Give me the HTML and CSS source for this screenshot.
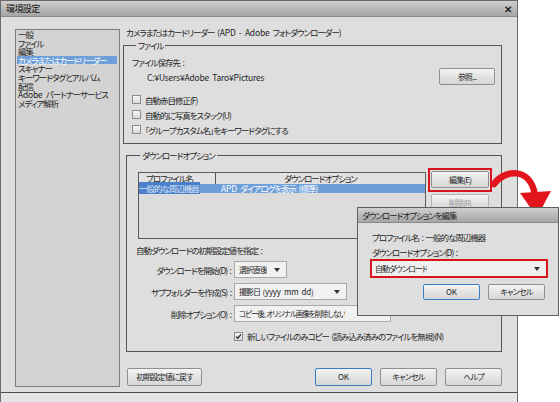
FILE: index.html
```html
<!DOCTYPE html>
<html lang="ja">
<head>
<meta charset="utf-8">
<title>環境設定</title>
<link rel="stylesheet" href="styles.css">
</head>
<body>
<div class="window">
  <div class="titlebar">
    <span class="title">環境設定</span>
    <span class="close">✕</span>
  </div>
  <div class="client">
    <ul class="nav">
      <li>一般</li>
      <li>ファイル</li>
      <li>編集</li>
      <li class="selected">カメラまたはカードリーダー</li>
      <li>スキャナー</li>
      <li>キーワードタグとアルバム</li>
      <li>配信</li>
      <li><span class="lat">Adobe </span>パートナーサービス</li>
      <li>メディア解析</li>
    </ul>
    <div class="panel">
      <div class="heading">カメラまたはカードリーダー <span class="lat">(APD - Adobe </span>フォトダウンローダー<span class="lat">)</span></div>
      <fieldset class="group group-file">
        <legend>ファイル</legend>
        <div class="label">ファイル保存先 :</div>
        <div class="path-row">
          <span class="path lat">C:¥Users¥Adobe Taro¥Pictures</span>
          <button class="btn btn-browse">参照...</button>
        </div>
        <div class="checks">
          <label class="check"><span class="box"></span>自動赤目修正(F)</label>
          <label class="check"><span class="box"></span>自動的に写真をスタック(U)</label>
          <label class="check"><span class="box"></span>「グループカスタム名」をキーワードタグにする</label>
        </div>
      </fieldset>
      <fieldset class="group group-dl">
        <legend>ダウンロードオプション</legend>
        <div class="list-row">
          <div class="listview">
            <div class="lv-head">
              <span class="c1">プロファイル名</span>
              <span class="c2">ダウンロードオプション</span>
            </div>
            <div class="lv-row sel">
              <span class="c1"><span class="hl">一般的な周辺機器</span></span>
              <span class="c2"><span class="lat">APD </span>ダイアログを表示 (標準)</span>
            </div>
          </div>
          <div class="side-btns">
            <div class="redbox"><button class="btn btn-side">編集(E)</button></div>
            <button class="btn btn-side btn-disabled">削除(R)</button>
          </div>
        </div>
        <div class="sub-heading">自動ダウンロードの初期設定値を指定 :</div>
        <div class="form">
          <span class="flabel">ダウンロードを開始(D) :</span>
          <div class="select sel-start"><span class="stext">選択直後</span><i class="caret"></i></div>
          <span class="flabel">サブフォルダーを作成(S) :</span>
          <div class="select sel-folder"><span class="stext">撮影日 <span class="lat">(yyyy mm dd)</span></span><i class="caret"></i></div>
          <span class="flabel">削除オプション(O) :</span>
          <div class="select sel-delete"><span class="stext">コピー後、オリジナル画像を削除しない</span><i class="caret"></i></div>
          <span class="flabel"></span>
          <label class="check check-on"><span class="box"><svg viewBox="0 0 9 9" width="9" height="9"><path d="M1.6 4.6 L3.6 6.8 L7.6 1.8" fill="none" stroke="#1b1b1b" stroke-width="1.6"/></svg></span>新しいファイルのみコピー (読み込み済みのファイルを無視)(N)</label>
        </div>
      </fieldset>
      <div class="footer">
        <button class="btn btn-reset">初期設定値に戻す</button>
        <div class="footer-right">
          <button class="btn btn-default btn-foot lat">OK</button>
          <button class="btn btn-foot">キャンセル</button>
          <button class="btn btn-foot">ヘルプ</button>
        </div>
      </div>
    </div>
  </div>
</div>

<svg class="arrow" width="70" height="60" viewBox="0 0 70 60">
  <path d="M4 22 C14 8 40 4 45 33" fill="none" stroke="#e2141c" stroke-width="6.5" stroke-linecap="round"/>
  <polygon points="30,31 61,29 47,55" fill="#e2141c"/>
</svg>

<div class="dialog">
  <div class="dlg-title">ダウンロードオプションを編集</div>
  <div class="dlg-body">
    <div class="dlg-line">プロファイル名 : 一般的な周辺機器</div>
    <div class="dlg-line">ダウンロードオプション(D) :</div>
    <div class="dlg-redbox">
      <div class="dlg-select"><span class="stext">自動ダウンロード</span><i class="caret"></i></div>
    </div>
    <div class="dlg-btns">
      <button class="btn btn-default btn-dlg lat">OK</button>
      <button class="btn btn-dlg">キャンセル</button>
    </div>
  </div>
</div>
</body>
</html>
```
FILE: styles.css
```css
* { box-sizing: border-box; }
html, body {
  margin: 0;
  padding: 0;
  background: #ffffff;
}
body {
  width: 560px;
  height: 402px;
  position: relative;
  overflow: hidden;
  font-family: "Noto Sans CJK JP", "Noto Sans", sans-serif;
  font-size: 8.5px;
  letter-spacing: -1px;
  word-spacing: 1.6px;
  font-feature-settings: "palt";
  color: #1e1e1e;
}
.lat { letter-spacing: -0.2px; }
.window {
  width: 518px;
  height: 402px;
  border: 1px solid #6a6a6a;
  border-bottom: none;
  background: #e4e4e4;
  display: flex;
  flex-direction: column;
}
.titlebar {
  height: 16px;
  background: linear-gradient(#cfcfcf, #a4a4a4);
  border-bottom: 1px solid #8a8a8a;
  display: flex;
  align-items: center;
  justify-content: space-between;
  padding: 0 5px 0 5px;
  flex: none;
}
.title { font-size: 9px; line-height: 12px; color: #111; letter-spacing: -0.6px; }
.close { font-size: 10px; font-weight: bold; color: #222; line-height: 10px; letter-spacing: 0; }
.client {
  height: 376px;
  background: #dedede;
  border-bottom: 1px solid #4a4a4a;
  display: flex;
  padding: 9px 0 0 14px;
  flex: none;
}
.nav {
  list-style: none;
  margin: 3px 0 0 0;
  padding: 0 0 0 1px;
  width: 105px;
  height: 358px;
  background: #d3d3d3;
  border: 1px solid #7c7c7c;
  flex: none;
}
.nav li {
  line-height: 8.6px;
  height: 8.6px;
  padding-left: 1px;
  white-space: nowrap;
}
.nav li.selected {
  background: #6e9fd8;
  color: #ffffff;
  margin-right: 2px;
}
.panel {
  margin-left: 3px;
  width: 380px;
  display: flex;
  flex-direction: column;
}
.heading {
  line-height: 12px;
  height: 12px;
  padding-left: 3px;
  white-space: nowrap;
}
.group {
  margin: 0;
  border: 1px solid #555555;
  min-width: 0;
}
.group legend {
  line-height: 10px;
  padding: 0 2px;
}
.group-file {
  margin-top: 2px;
  width: 379px;
  padding: 7px 6px 6px 8px;
}
.group-file legend { margin-left: 4px; }
.label { line-height: 11px; height: 11px; }
.path-row {
  height: 17px;
  display: flex;
  align-items: center;
  justify-content: space-between;
  padding-left: 15px;
}
.checks {
  margin-top: 7px;
  display: flex;
  flex-direction: column;
}
.check {
  display: flex;
  align-items: center;
  height: 15px;
  white-space: nowrap;
}
.box {
  width: 9px;
  height: 9px;
  border: 1px solid #8c8c8c;
  background: linear-gradient(#f6f6f6, #d9d9d9);
  margin-right: 4px;
  flex: none;
  display: flex;
  align-items: center;
  justify-content: center;
}
.box svg { display: block; }
.btn {
  font-family: inherit;
  font-size: 8px;
  letter-spacing: -0.8px;
  word-spacing: 1.5px;
  font-feature-settings: "palt";
  color: #1e1e1e;
  border: 1px solid #8f8f8f;
  border-radius: 2px;
  background: linear-gradient(#f4f4f4, #e3e3e3 50%, #d6d6d6);
  padding: 0;
  line-height: 1;
  display: flex;
  align-items: center;
  justify-content: center;
}
.btn.lat { letter-spacing: 0; }
.btn-browse { width: 56px; height: 17px; }
.group-dl {
  margin-top: 6px;
  margin-left: 3px;
  width: 376px;
  padding: 8px 6px 8px 9px;
}
.group-dl legend { margin-left: 4px; }
.list-row {
  display: flex;
  align-items: flex-start;
  height: 71px;
}
.listview {
  margin-top: 4px;
  margin-left: 2px;
  width: 288px;
  height: 67px;
  border: 1px solid #5a5a5a;
  background: #dcdcdc;
  flex: none;
}
.lv-head {
  display: flex;
  height: 11px;
  line-height: 11px;
  background: #e2e2e2;
}
.lv-head .c1 {
  width: 77px;
  padding-left: 7px;
  border-right: 1px solid #555;
}
.lv-head .c2 {
  flex: 1;
  text-align: center;
}
.lv-row {
  display: flex;
  height: 9px;
  line-height: 9px;
  white-space: nowrap;
}
.lv-row.sel { background: #6c9ed8; color: #ffffff; }
.lv-row .c1 { width: 77px; }
.lv-row .hl { background: #4b80cc; color: #dfe9f7; padding-right: 1px; }
.lv-row .c2 { padding-left: 5px; }
.side-btns {
  margin-left: 2px;
  display: flex;
  flex-direction: column;
}
.redbox {
  border: 2px solid #d8141c;
  padding: 1px 1px 2px 1px;
}
.btn-side { width: 58px; height: 17px; }
.btn-disabled {
  margin-top: 2px;
  margin-left: 3px;
  color: #9a9a9a;
  border-color: #b2b2b2;
}
.sub-heading {
  margin-top: 5px;
  line-height: 12px;
  height: 12px;
}
.form {
  margin-top: 5px;
  display: grid;
  grid-template-columns: 95px auto;
  column-gap: 3px;
  row-gap: 5px;
  align-items: center;
  justify-items: start;
}
.flabel {
  justify-self: end;
  white-space: nowrap;
}
.select {
  height: 17px;
  border: 1px solid #a9a9a9;
  background: #f1f1f1;
  display: flex;
  align-items: center;
  justify-content: space-between;
  padding: 0 6px 0 4px;
  font-size: 8px;
  letter-spacing: -1px;
  white-space: nowrap;
}
.stext { overflow: hidden; min-width: 0; }
.sel-start { width: 53px; }
.sel-folder { width: 113px; }
.sel-delete { width: 157px; padding-right: 5px; font-size: 7.5px; letter-spacing: -1.05px; }
.caret {
  flex: none;
  width: 0;
  height: 0;
  margin-left: 3px;
  border-left: 3.5px solid transparent;
  border-right: 3.5px solid transparent;
  border-top: 4px solid #333;
}
.check-on { margin-top: 2px; height: 14px; }
.footer {
  margin-top: 16px;
  display: flex;
  justify-content: space-between;
  padding: 0 1px 0 4px;
}
.btn-reset { width: 75px; height: 18px; }
.footer-right { display: flex; gap: 8px; }
.btn-foot { width: 57px; height: 18px; }
.btn-default { border-color: #3b7cc0; }
.arrow {
  position: absolute;
  left: 490px;
  top: 162px;
}
.dialog {
  position: absolute;
  left: 357px;
  top: 207px;
  width: 202px;
  height: 109px;
  border: 1px solid #5e5e5e;
  background: #dedede;
  display: flex;
  flex-direction: column;
}
.dlg-title {
  height: 15px;
  line-height: 15px;
  padding-left: 4px;
  background: linear-gradient(#cfcfcf, #a6a6a6);
  border-bottom: 1px solid #8a8a8a;
  white-space: nowrap;
}
.dlg-body {
  padding: 8px 13px 0 14px;
  display: flex;
  flex-direction: column;
}
.dlg-line {
  line-height: 12px;
  height: 12px;
  white-space: nowrap;
}
.dlg-line + .dlg-line { margin-top: 3px; }
.dlg-redbox {
  margin-top: 1px;
  margin-left: -2px;
  width: 178px;
  height: 19px;
  border: 2px solid #d8141c;
}
.dlg-select {
  height: 15px;
  background: #efefef;
  display: flex;
  align-items: center;
  justify-content: space-between;
  padding: 0 6px 0 3px;
  font-size: 8px;
  letter-spacing: -0.9px;
}
.dlg-btns {
  margin-top: 6px;
  display: flex;
  justify-content: flex-end;
  gap: 8px;
}
.btn-dlg { width: 57px; height: 16px; }
```
